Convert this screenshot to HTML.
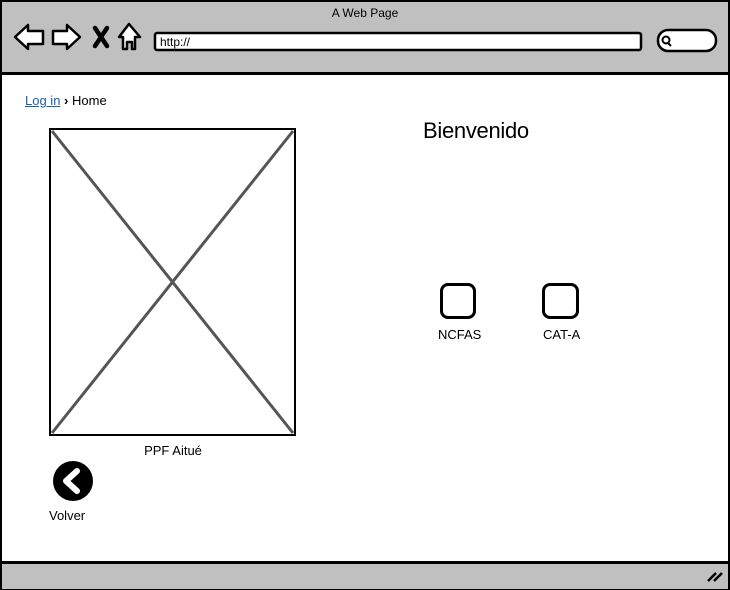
<!DOCTYPE html>
<html><head><style>
body{margin:0;width:730px;height:590px;background:#fff;font-family:"Liberation Sans",sans-serif;position:relative;overflow:hidden}
.a{position:absolute}
</style></head><body>
<div class="a" style="left:0;top:0;width:726px;height:586px;border:2px solid #000;background:#fff"></div>
<div class="a" style="left:2px;top:2px;width:726px;height:70px;background:#c0c0c0;border-bottom:3px solid #000"></div>
<div class="a" style="left:0;top:6px;width:730px;text-align:center;font-size:12px">A Web Page</div>
<svg class="a" style="left:0;top:0" width="730" height="80">
<g fill="#fff" stroke="#000" stroke-width="2.5" stroke-linejoin="round">
<path d="M15 37 L28 25 L28 31 L43 31 L43 44 L28 44 L28 49 Z"/>
<path d="M80 37 L67 25 L67 31 L53 31 L53 44 L67 44 L67 49 Z"/>
<path d="M119 37 L129 24 L140 37 L135 37 L135 49 L132 49 L132 42 L127 42 L127 49 L123 49 L123 37 Z"/>
<rect x="155" y="33" width="486" height="17" rx="2"/>
<rect x="658" y="30" width="58" height="21" rx="10"/>
</g>
<path d="M95 28 L107 46 M107 28 L95 46" stroke="#000" stroke-width="4.5" stroke-linecap="round"/>
<circle cx="666" cy="40" r="3.5" fill="none" stroke="#000" stroke-width="2"/>
<line x1="668" y1="43" x2="671" y2="46" stroke="#000" stroke-width="2"/>
<text x="160" y="46" font-size="12" font-family="Liberation Sans">http://</text>
</svg>
<div class="a" style="left:25px;top:93px;font-size:13px"><span style="color:#1a5fb4;text-decoration:underline">Log in</span> <b>›</b> Home</div>
<svg class="a" style="left:49px;top:128px" width="248" height="309">
<rect x="1" y="1" width="245" height="306" fill="#fff" stroke="#000" stroke-width="2"/>
<line x1="3" y1="3" x2="244" y2="305" stroke="#555" stroke-width="3"/>
<line x1="244" y1="3" x2="3" y2="305" stroke="#555" stroke-width="3"/>
</svg>
<div class="a" style="left:49px;top:443px;width:248px;text-align:center;font-size:13px">PPF Aitué</div>
<svg class="a" style="left:52px;top:460px" width="42" height="42">
<circle cx="21" cy="21" r="20" fill="#000"/>
<path d="M25 11 L14 21 L25 31" fill="none" stroke="#fff" stroke-width="6" stroke-linecap="round" stroke-linejoin="round"/>
</svg>
<div class="a" style="left:49px;top:508px;font-size:13px">Volver</div>
<div class="a" style="left:423px;top:118px;font-size:22px;letter-spacing:-0.3px">Bienvenido</div>
<div class="a" style="left:440px;top:283px;width:36px;height:36px;border:3px solid #000;border-radius:8px;box-sizing:border-box"></div>
<div class="a" style="left:542px;top:283px;width:37px;height:36px;border:3px solid #000;border-radius:8px;box-sizing:border-box"></div>
<div class="a" style="left:438px;top:327px;font-size:13px">NCFAS</div>
<div class="a" style="left:543px;top:327px;font-size:13px">CAT-A</div>
<div class="a" style="left:2px;top:561px;width:726px;height:25px;background:#c0c0c0;border-top:3px solid #000"></div>
<svg class="a" style="left:706px;top:568px" width="20" height="16"><path d="M2 13 L10 5 M8 13 L16 5" stroke="#000" stroke-width="2.5"/></svg>
</body></html>
